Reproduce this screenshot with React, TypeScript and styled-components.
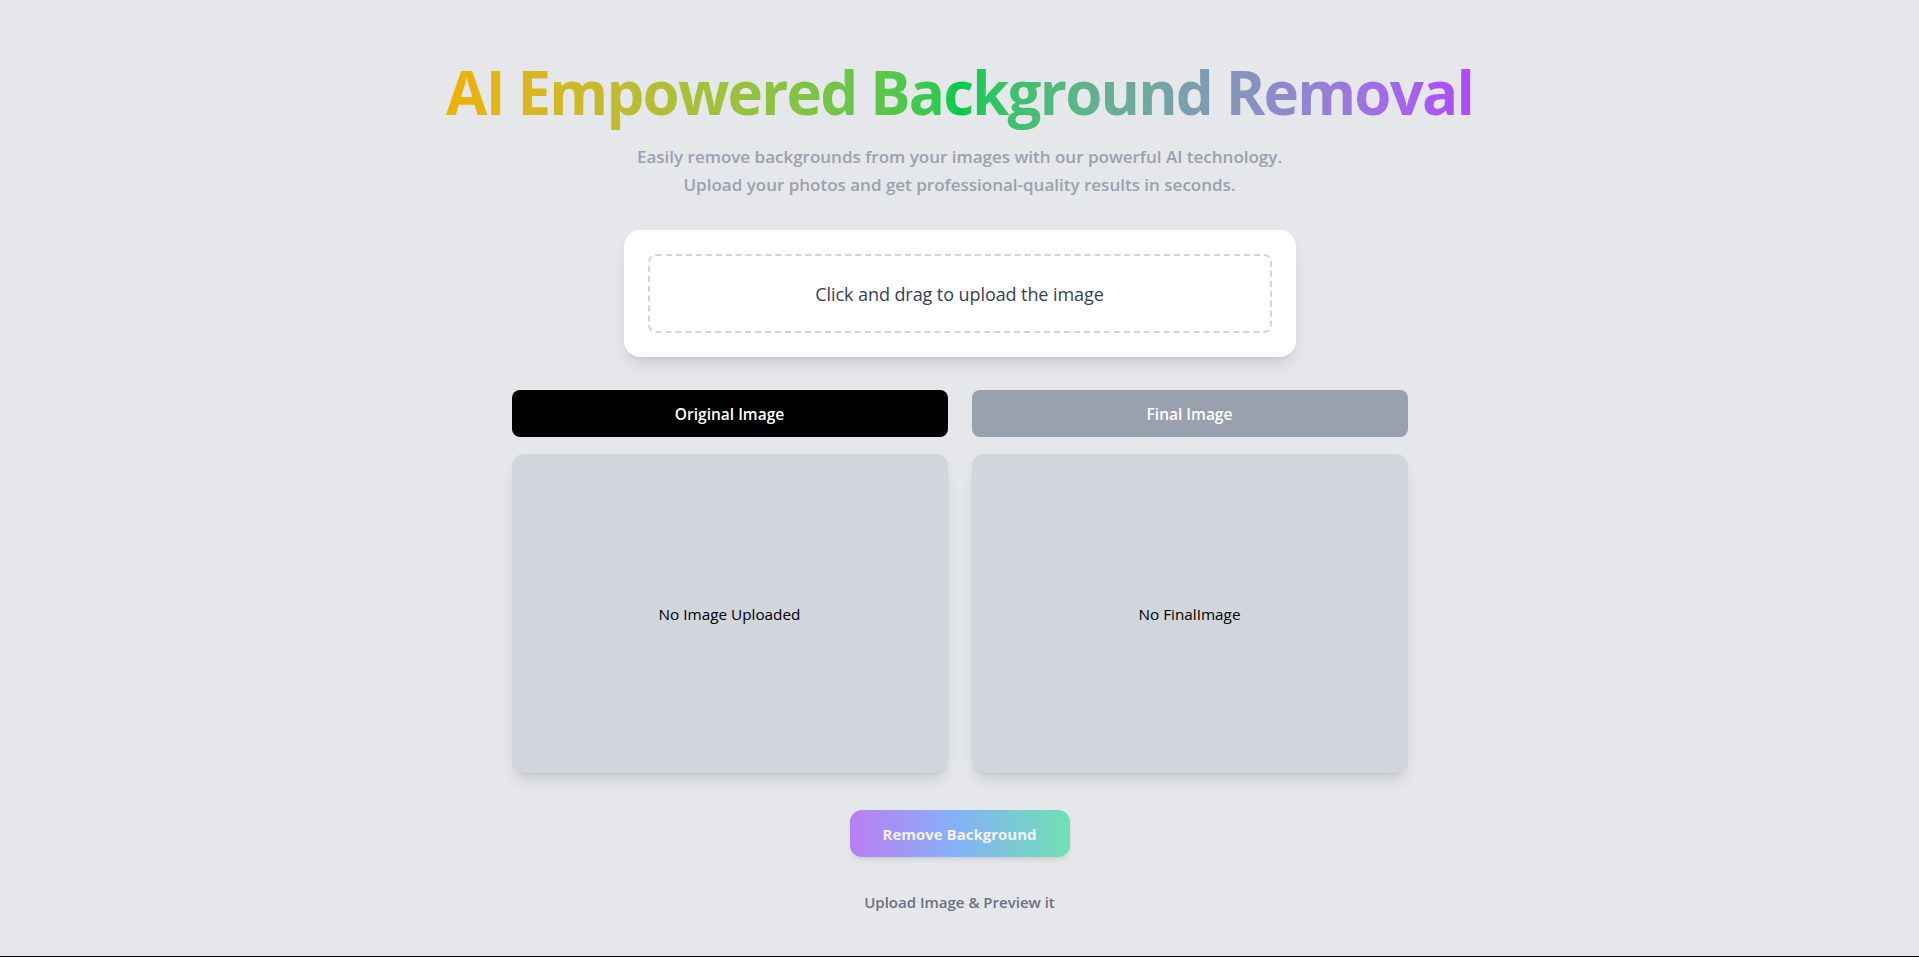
import React from "react";
import styled, { createGlobalStyle } from "styled-components";

const Global = createGlobalStyle`
  * { box-sizing: border-box; }
  html, body { margin: 0; padding: 0; }
  body {
    background: #e5e7eb;
    font-family: "Open Sans", "Noto Sans", sans-serif;
  }
`;

const Page = styled.main`
  min-height: 100vh;
  background: #e5e7eb;
  border-bottom: 1px solid #000;
  display: flex;
  flex-direction: column;
  align-items: center;
  padding: 62px 16px 0;
`;

const Title = styled.h1`
  margin: 0;
  padding-bottom: 10px;
  font-size: 60px;
  line-height: 60px;
  font-weight: 700;
  letter-spacing: -1.8px;
  background: linear-gradient(in oklab to right, #efb100, #00c950, #ad46ff);
  -webkit-background-clip: text;
  background-clip: text;
  color: transparent;
  text-align: center;
`;

const Subtitle = styled.p`
  margin: 11px 0 0;
  font-size: 17px;
  line-height: 28px;
  font-weight: 600;
  color: #99a1af;
  text-align: center;
`;

const UploadCard = styled.section`
  margin-top: 31px;
  width: 672px;
  background: #fff;
  border-radius: 16px;
  padding: 24px;
  box-shadow: 0 10px 15px -3px rgba(0, 0, 0, 0.1), 0 4px 6px -4px rgba(0, 0, 0, 0.1);
`;

const DropZone = styled.label`
  display: flex;
  align-items: center;
  justify-content: center;
  height: 79px;
  border: 2px dashed #d1d5dc;
  border-radius: 8px;
  font-size: 18px;
  letter-spacing: -0.08px;
  font-weight: 500;
  color: #364153;
  cursor: pointer;
`;

const Grid = styled.div`
  margin-top: 33px;
  width: 896px;
  display: grid;
  grid-template-columns: 1fr 1fr;
  column-gap: 24px;
  row-gap: 17px;
`;

const Tab = styled.button<{ $active?: boolean }>`
  height: 47px;
  border: none;
  border-radius: 8px;
  background: ${(p) => (p.$active ? "#000" : "#99a1af")};
  color: #fff;
  font-family: inherit;
  font-size: 15.5px;
  font-weight: 600;
  cursor: pointer;
`;

const Preview = styled.div`
  height: 319px;
  border-radius: 12px;
  background: #d1d5dc;
  display: flex;
  align-items: center;
  justify-content: center;
  font-size: 15.3px;
  color: #000;
  box-shadow: 0 10px 15px -3px rgba(0, 0, 0, 0.1), 0 4px 6px -4px rgba(0, 0, 0, 0.1);
`;

const ActionButton = styled.button`
  margin-top: 37px;
  width: 220px;
  height: 47px;
  border: none;
  border-radius: 12px;
  background: linear-gradient(to right, #b97ef4, #84b3f6, #6fe1b2);
  color: #f3f2ff;
  font-family: inherit;
  font-size: 15px;
  font-weight: 700;
  box-shadow: 0 4px 6px -1px rgba(0, 0, 0, 0.08), 0 2px 4px -2px rgba(0, 0, 0, 0.08);
  cursor: pointer;
`;

const Footnote = styled.p`
  margin: 35px 0 0;
  font-size: 15px;
  line-height: 20px;
  font-weight: 600;
  color: #6a7282;
`;

export default function App() {
  return (
    <>
      <Global />
      <Page>
        <Title>AI Empowered Background Removal</Title>
        <Subtitle>
          Easily remove backgrounds from your images with our powerful AI technology.
          <br />
          Upload your photos and get professional-quality results in seconds.
        </Subtitle>
        <UploadCard>
          <DropZone>Click and drag to upload the image</DropZone>
        </UploadCard>
        <Grid>
          <Tab $active>Original Image</Tab>
          <Tab>Final Image</Tab>
          <Preview>No Image Uploaded</Preview>
          <Preview>No FinalImage</Preview>
        </Grid>
        <ActionButton>Remove Background</ActionButton>
        <Footnote>Upload Image &amp; Preview it</Footnote>
      </Page>
    </>
  );
}
